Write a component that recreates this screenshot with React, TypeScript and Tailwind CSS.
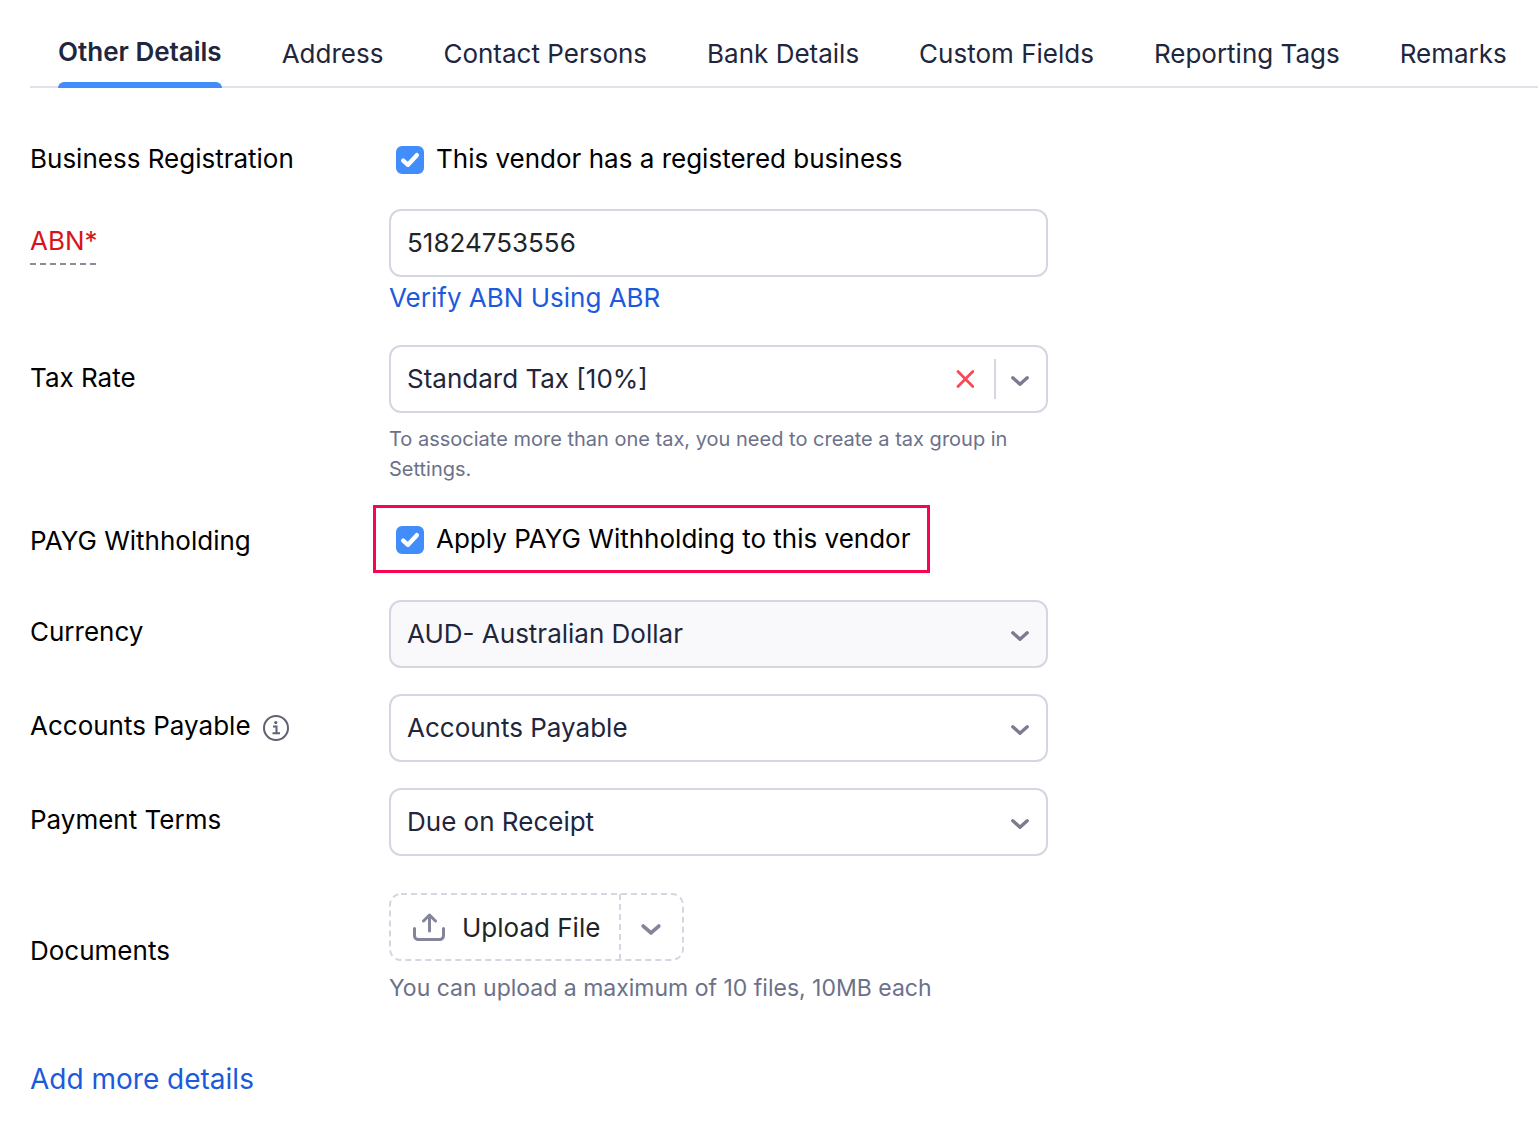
import { useState, type ReactNode } from "react";

const TABS = [
  "Other Details",
  "Address",
  "Contact Persons",
  "Bank Details",
  "Custom Fields",
  "Reporting Tags",
  "Remarks",
];

function Chevron({ className }: { className: string }) {
  return (
    <svg viewBox="0 0 20 12" className={className} fill="none" aria-hidden="true">
      <path d="M2.8 2.8 10 9.2l7.2-6.4" stroke="currentColor" strokeWidth="3.4" strokeLinecap="round" strokeLinejoin="round" />
    </svg>
  );
}

function UploadIcon() {
  return (
    <svg viewBox="0 0 34 28" className="h-7 w-[34px] text-[#84849a]" fill="none" stroke="currentColor" strokeWidth="3" strokeLinecap="round" strokeLinejoin="round" aria-hidden="true">
      <path d="M2.5 15.5v7.2a3.800 3.800 0 0 0 3.800 3.800h21.400a3.800 3.800 0 0 0 3.800-3.800v-7.200" />
      <path d="M17.500 18V2.500M11.500 8l6-6 6 6" />
    </svg>
  );
}

function InfoIcon() {
  return (
    <svg viewBox="0 0 26 26" className="mt-1 size-[26px] text-[#5f6270]" fill="none" stroke="currentColor" aria-hidden="true">
      <circle cx="13" cy="13" r="12" strokeWidth="2" />
      <circle cx="12.800" cy="7.600" r="1.600" fill="currentColor" stroke="none" />
      <path d="M10 11.500h3.500v6.500M9.500 18.200h7.500" strokeWidth="2" />
    </svg>
  );
}

function Row({ children, className = "" }: { children: ReactNode; className?: string }) {
  return (
    <div className={`grid grid-cols-[359px_minmax(0,659px)] items-start ${className}`}>
      {children}
    </div>
  );
}

function FieldLabel({ htmlFor, children }: { htmlFor: string; children: ReactNode }) {
  return (
    <label htmlFor={htmlFor} className="flex h-16 items-center gap-3">
      {children}
    </label>
  );
}

function CheckOption({ id, children }: { id: string; children: ReactNode }) {
  const [checked, setChecked] = useState(true);
  return (
    <span className="flex items-center gap-3">
      <span className="relative flex size-7 shrink-0">
        <input
          id={id}
          type="checkbox"
          checked={checked}
          onChange={(e) => setChecked(e.target.checked)}
          className="peer size-7 appearance-none rounded-md border-2 border-[#d7d5e2] bg-white checked:border-[#408dfb] checked:bg-[#408dfb]"
        />
        <svg viewBox="0 0 28 28" className="pointer-events-none absolute inset-0 hidden size-7 peer-checked:block" fill="none" aria-hidden="true">
          <path d="M7.200 14.600 12 18.800l8.800-9.600" stroke="white" strokeWidth="4.400" strokeLinecap="round" strokeLinejoin="round" />
        </svg>
      </span>
      <label htmlFor={id} className="pb-0.5 leading-[30px]">{children}</label>
    </span>
  );
}

function SelectBox({ id, options, muted = false, clearable = false }: { id: string; options: string[]; muted?: boolean; clearable?: boolean }) {
  const [value, setValue] = useState(options[0]);
  return (
    <div className="relative">
      <select
        id={id}
        value={value}
        onChange={(e) => setValue(e.target.value)}
        className={`h-[68px] w-full appearance-none rounded-xl border-2 border-[#d7d5e2] pr-24 pl-4 text-[#21263c] ${muted ? "bg-[#f9f9fb]" : "bg-white"}`}
      >
        {clearable && <option value="" />}
        {options.map((o) => (
          <option key={o}>{o}</option>
        ))}
      </select>
      <div className="pointer-events-none absolute inset-y-0 right-[18px] flex items-center">
        {clearable && (
          <>
            <button type="button" aria-label="Clear tax rate" onClick={() => setValue("")} className="pointer-events-auto mr-5 text-[#f84a55]">
              <svg viewBox="0 0 18 18" className="size-[18px]" fill="none" stroke="currentColor" strokeWidth="2.800" strokeLinecap="round" aria-hidden="true">
                <path d="M2 1.600l14.800 14.800M16.800 1.600L2 16.400" />
              </svg>
            </button>
            <span className="mr-3.5 h-10 w-0.5 bg-[#d7d5e2]" />
          </>
        )}
        <Chevron className="mt-1 h-3 w-5 text-[#7b7b91]" />
      </div>
    </div>
  );
}

export default function App() {
  const [tab, setTab] = useState(TABS[0]);
  const [abn, setAbn] = useState("51824753556");
  return (
    <main className="overflow-hidden bg-white pb-8 pl-[30px] font-['Inter',sans-serif] text-[26px] leading-8 text-black">
      <nav role="tablist" className="flex h-[88px] gap-[60px] border-b-2 border-[#dfe2e9] pl-7 text-[#21263c]">
        {TABS.map((name) => (
          <button
            key={name}
            type="button"
            role="tab"
            aria-selected={tab === name}
            onClick={() => setTab(name)}
            className={`relative shrink-0 pt-[22px] whitespace-nowrap ${
              tab === name
                ? "pb-1 font-semibold after:absolute after:inset-x-0 after:-bottom-0.5 after:h-1.5 after:rounded-t-md after:bg-[#408dfb]"
                : ""
            }`}
          >
            {name}
          </button>
        ))}
      </nav>

      <form className="pt-14" onSubmit={(e) => e.preventDefault()}>
        <Row>
          <span className="leading-[30px]">Business Registration</span>
          <div className="pl-[7px]">
            <CheckOption id="registered">This vendor has a registered business</CheckOption>
          </div>
        </Row>

        <Row className="mt-[33px]">
          <FieldLabel htmlFor="abn">
            <span className="relative mt-1 pb-1 text-[#d6141c]">
              ABN*
              <svg className="absolute bottom-0 left-0 h-0.5 w-full translate-y-1 text-[#8c8c99]" aria-hidden="true">
                <path d="M0 1h80" stroke="currentColor" strokeWidth="2" strokeDasharray="6 4" />
              </svg>
            </span>
          </FieldLabel>
          <div>
            <input
              id="abn"
              value={abn}
              onChange={(e) => setAbn(e.target.value)}
              className="block h-[68px] w-full rounded-xl border-2 border-[#d7d5e2] px-4 pb-0.5 text-[#212529]"
            />
            <a href="#verify" className="mt-[5px] block text-[#1b5bdb]">Verify ABN Using ABR</a>
          </div>
        </Row>

        <Row className="mt-[31px]">
          <FieldLabel htmlFor="tax">
            <span className="pt-0.5">Tax Rate</span>
          </FieldLabel>
          <div>
            <SelectBox id="tax" options={["Standard Tax [10%]"]} clearable />
            <p className="mt-[11px] text-xl leading-[30px] text-[#6c718a]">
              To associate more than one tax, you need to create a tax group in Settings.
            </p>
          </div>
        </Row>

        <Row className="mt-[21px]">
          <span className="pt-5">PAYG Withholding</span>
          <div className="-ml-4 flex">
            <div className="border-3 border-[#f80552] pt-4 pr-4 pb-[14px] pl-5">
              <CheckOption id="payg">Apply PAYG Withholding to this vendor</CheckOption>
            </div>
          </div>
        </Row>

        <Row className="mt-[27px]">
          <FieldLabel htmlFor="currency">Currency</FieldLabel>
          <SelectBox id="currency" options={["AUD- Australian Dollar"]} muted />
        </Row>

        <Row className="mt-[26px]">
          <FieldLabel htmlFor="payable">
            Accounts Payable
            <InfoIcon />
          </FieldLabel>
          <SelectBox id="payable" options={["Accounts Payable"]} />
        </Row>

        <Row className="mt-[26px]">
          <FieldLabel htmlFor="terms">Payment Terms</FieldLabel>
          <SelectBox id="terms" options={["Due on Receipt"]} />
        </Row>

        <Row className="mt-[37px]">
          <span className="self-center pt-1.5">Documents</span>
          <div>
            <div className="relative flex h-[68px] w-fit text-[#212529]">
              <svg className="pointer-events-none absolute inset-0 size-full text-[#d7d5e2]" fill="none" stroke="currentColor" strokeWidth="2" strokeDasharray="6 4" aria-hidden="true">
                <rect x="1" y="1" width="293" height="66" rx="11" />
                <path d="M231 1v66" />
              </svg>
              <button type="button" className="flex w-[231px] items-center gap-4 pl-[23px] whitespace-nowrap">
                <UploadIcon />
                <span className="pt-0.5">Upload File</span>
              </button>
              <button type="button" aria-label="More upload options" className="flex w-16 items-center justify-center pr-0.5">
                <Chevron className="mt-1 h-[13px] w-[22px] text-[#84849a]" />
              </button>
            </div>
            <p className="mt-3 text-[23px] leading-[30px] text-[#6c718a]">
              You can upload a maximum of 10 files, 10MB each
            </p>
          </div>
        </Row>

        <a href="#more" className="mt-[60px] inline-block text-[28px] text-[#1b5bdb]">Add more details</a>
      </form>
    </main>
  );
}
